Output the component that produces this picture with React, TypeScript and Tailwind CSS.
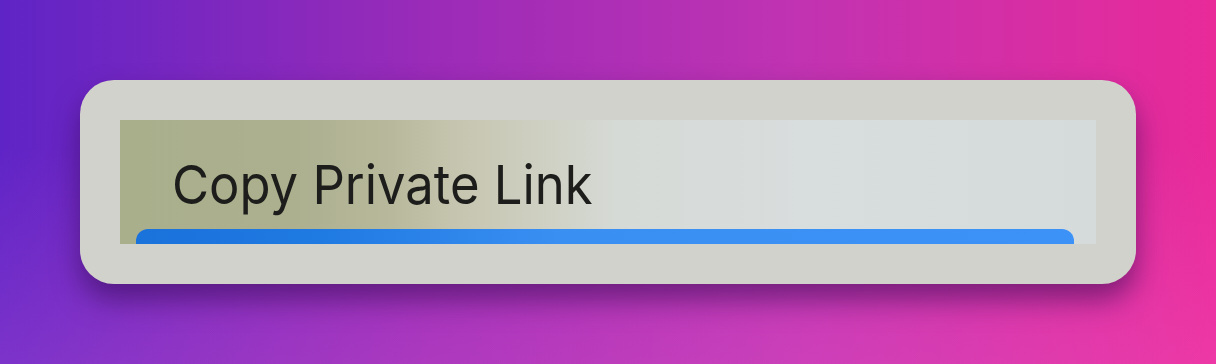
export default function App() {
  return (
    <main className="relative flex h-[364px] w-[1216px] items-start overflow-hidden bg-[linear-gradient(90deg,#5f24c6_0%,#9a2bb8_35%,#c033b2_65%,#e92a99_100%)] px-20 pt-20 font-['Inter',sans-serif]">
      <div className="pointer-events-none absolute inset-0 bg-[linear-gradient(180deg,rgba(255,255,255,0)_40%,rgba(255,120,220,0.18)_100%)]" />
      <section className="relative w-full rounded-[34px] bg-[#d2d2cc] p-10 shadow-[0_16px_28px_rgba(50,10,80,0.55)]">
        <div className="flex h-[124px] flex-col justify-between bg-[linear-gradient(90deg,#a9ae8b_0%,#acb08f_18%,#b8b99c_28%,#c5c4ae_34%,#cfd1c4_44%,#d6dad6_51%,#d8dddd_70%,#d5dada_100%)]">
          <div className="pl-[52px] pt-[38px]">
            <span className="inline-block origin-left scale-x-[0.94] text-[54px] leading-none tracking-normal text-[#1d1d1b]">
              Copy Private Link
            </span>
          </div>
          <div className="ml-4 mr-[22px] h-[15px] rounded-t-[12px] bg-[linear-gradient(90deg,#1a72db_0%,#1f7ae2_20%,#3a8ff2_45%,#3c92f7_100%)]" />
        </div>
      </section>
    </main>
  );
}
